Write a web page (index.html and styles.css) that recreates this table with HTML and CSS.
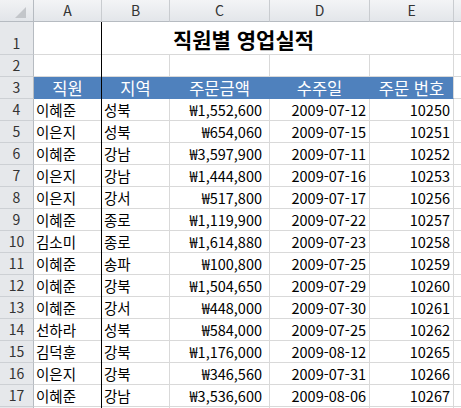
FILE: index.html
```html
<!DOCTYPE html>
<html lang="ko">
<head>
<meta charset="utf-8">
<link rel="stylesheet" href="styles.css">
</head>
<body>
<div class="sheet">
  <div class="corner"><span class="tri"></span></div>
  <div class="colhead">A</div>
  <div class="colhead">B</div>
  <div class="colhead">C</div>
  <div class="colhead">D</div>
  <div class="colhead">E</div>
  <div class="colhead"></div>

  <div class="rowhead">1</div>
  <div class="cell title">직원별 영업실적</div>
  <div class="cell"></div>

  <div class="rowhead">2</div>
  <div class="cell"></div><div class="cell"></div><div class="cell"></div><div class="cell"></div><div class="cell"></div><div class="cell"></div>

  <div class="rowhead">3</div>
  <div class="cell th">직원</div>
  <div class="cell th">지역</div>
  <div class="cell th">주문금액</div>
  <div class="cell th">수주일</div>
  <div class="cell th last">주문 번호</div>
  <div class="cell"></div>

  <div class="rowhead">4</div><div class="cell">이혜준</div><div class="cell">성북</div><div class="cell won">₩1,552,600</div><div class="cell num">2009-07-12</div><div class="cell num">10250</div><div class="cell"></div>
  <div class="rowhead">5</div><div class="cell">이은지</div><div class="cell">성북</div><div class="cell won">₩654,060</div><div class="cell num">2009-07-15</div><div class="cell num">10251</div><div class="cell"></div>
  <div class="rowhead">6</div><div class="cell">이혜준</div><div class="cell">강남</div><div class="cell won">₩3,597,900</div><div class="cell num">2009-07-11</div><div class="cell num">10252</div><div class="cell"></div>
  <div class="rowhead">7</div><div class="cell">이은지</div><div class="cell">강남</div><div class="cell won">₩1,444,800</div><div class="cell num">2009-07-16</div><div class="cell num">10253</div><div class="cell"></div>
  <div class="rowhead">8</div><div class="cell">이은지</div><div class="cell">강서</div><div class="cell won">₩517,800</div><div class="cell num">2009-07-17</div><div class="cell num">10256</div><div class="cell"></div>
  <div class="rowhead">9</div><div class="cell">이혜준</div><div class="cell">종로</div><div class="cell won">₩1,119,900</div><div class="cell num">2009-07-22</div><div class="cell num">10257</div><div class="cell"></div>
  <div class="rowhead">10</div><div class="cell">김소미</div><div class="cell">종로</div><div class="cell won">₩1,614,880</div><div class="cell num">2009-07-23</div><div class="cell num">10258</div><div class="cell"></div>
  <div class="rowhead">11</div><div class="cell">이혜준</div><div class="cell">송파</div><div class="cell won">₩100,800</div><div class="cell num">2009-07-25</div><div class="cell num">10259</div><div class="cell"></div>
  <div class="rowhead">12</div><div class="cell">이혜준</div><div class="cell">강북</div><div class="cell won">₩1,504,650</div><div class="cell num">2009-07-29</div><div class="cell num">10260</div><div class="cell"></div>
  <div class="rowhead">13</div><div class="cell">이혜준</div><div class="cell">강서</div><div class="cell won">₩448,000</div><div class="cell num">2009-07-30</div><div class="cell num">10261</div><div class="cell"></div>
  <div class="rowhead">14</div><div class="cell">선하라</div><div class="cell">성북</div><div class="cell won">₩584,000</div><div class="cell num">2009-07-25</div><div class="cell num">10262</div><div class="cell"></div>
  <div class="rowhead">15</div><div class="cell">김덕훈</div><div class="cell">강북</div><div class="cell won">₩1,176,000</div><div class="cell num">2009-08-12</div><div class="cell num">10265</div><div class="cell"></div>
  <div class="rowhead">16</div><div class="cell">이은지</div><div class="cell">강북</div><div class="cell won">₩346,560</div><div class="cell num">2009-07-31</div><div class="cell num">10266</div><div class="cell"></div>
  <div class="rowhead">17</div><div class="cell">이혜준</div><div class="cell">강남</div><div class="cell won">₩3,536,600</div><div class="cell num">2009-08-06</div><div class="cell num">10267</div><div class="cell"></div>
  <div class="rowhead"></div><div class="cell"></div><div class="cell"></div><div class="cell"></div><div class="cell"></div><div class="cell"></div><div class="cell"></div>

  <div class="freeze"></div>
</div>
</body>
</html>
```

FILE: styles.css
```css
* { box-sizing: border-box; }
html, body { margin: 0; padding: 0; background: #fff; }
body { width: 461px; height: 408px; overflow: hidden; }

.sheet {
  position: relative;
  display: grid;
  grid-template-columns: 34px 68px 68px 100px 100px 84px 20px;
  grid-template-rows: 22px 33px;
  grid-auto-rows: 22px;
  font-family: "Noto Sans CJK KR", "Noto Sans", sans-serif;
  font-size: 14.5px;
  color: #000;
}

.corner {
  position: relative;
  background: linear-gradient(#f1f2f4, #e2e5e9);
  border-right: 1px solid #b6bbc1;
  border-bottom: 1px solid #b6bbc1;
}
.tri {
  position: absolute;
  right: 7px;
  bottom: 3px;
  width: 0;
  height: 0;
  border-left: 11px solid transparent;
  border-bottom: 11px solid #c3c6ca;
}

.colhead {
  background: linear-gradient(#f3f4f6, #e3e6ea);
  border-right: 1px solid #c9ccd0;
  border-bottom: 1px solid #b6bbc1;
  color: #333;
  font-size: 14px;
  text-align: center;
  line-height: 21px;
}

.rowhead {
  background: #e6e8eb;
  border-right: 1px solid #b6bbc1;
  border-bottom: 1px solid #cdd0d4;
  color: #333;
  font-size: 14px;
  text-align: center;
  display: flex;
  align-items: flex-end;
  justify-content: center;
  line-height: 21px;
}

.cell {
  border-right: 1px solid #d9d9d9;
  border-bottom: 1px solid #d9d9d9;
  padding: 0 2px;
  line-height: 21px;
  white-space: nowrap;
  overflow: hidden;
  display: flex;
  align-items: flex-end;
}

.title {
  grid-column: span 5;
  justify-content: center;
  font-size: 21px;
  font-weight: bold;
  line-height: 30px;
}

.th {
  background: #4f81bd;
  color: #fff;
  border-color: #4f81bd;
  justify-content: center;
  align-items: center;
  font-size: 16.5px;
  line-height: 1;
  padding-top: 1px;
}
.th.last { border-right-color: #d9d9d9; }

.num { justify-content: flex-end; padding-right: 3px; }
.won { justify-content: flex-end; padding-right: 7px; }

.freeze {
  position: absolute;
  left: 101px;
  top: 22px;
  bottom: 0;
  width: 1px;
  background: #000;
}
```
